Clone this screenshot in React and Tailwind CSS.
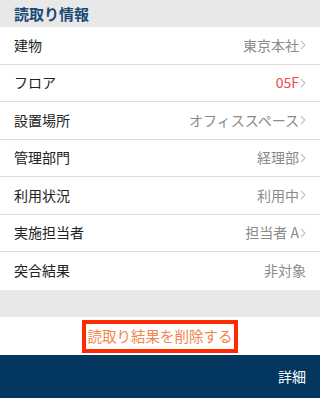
const rows = [
  { label: '建物', value: '東京本社', arrow: true },
  { label: 'フロア', value: '05F', arrow: true, red: true },
  { label: '設置場所', value: 'オフィススペース', arrow: true },
  { label: '管理部門', value: '経理部', arrow: true },
  { label: '利用状況', value: '利用中', arrow: true },
  { label: '実施担当者', value: '担当者 A', arrow: true },
  { label: '突合結果', value: '非対象', arrow: false },
];

function Chevron() {
  return (
    <svg width="6" height="10" viewBox="0 0 6 10" className="ml-[1px]">
      <path d="M1 1l4 4-4 4" fill="none" stroke="#c4c4c4" strokeWidth="1.2" />
    </svg>
  );
}

export default function App() {
  return (
    <div
      className="w-[320px] h-[398px] flex flex-col bg-white overflow-hidden"
      style={{ fontFamily: '"Noto Sans CJK JP", "Noto Sans", sans-serif' }}
    >
      {/* Section header */}
      <div className="h-[27px] bg-[#e8e8e8] flex items-center px-[14px]">
        <p className="text-[15px] font-bold text-[#1b4a74] leading-none">読取り情報</p>
      </div>

      {/* Rows */}
      <div className="flex flex-col">
        {rows.map((r, i) => (
          <div
            key={r.label}
            className={`h-[37.5px] flex items-center justify-between pl-[14px] pr-[14px]
              ${i < rows.length - 1 ? 'border-b border-[#dcdcdc]' : ''}`}
          >
            <span className="text-[14px] text-[#222]">{r.label}</span>
            <span className="flex items-center">
              <span className={`text-[14px] ${r.red ? 'text-[#f04848]' : 'text-[#8a8a8a]'}`}>
                {r.value}
              </span>
              {r.arrow && <Chevron />}
            </span>
          </div>
        ))}
      </div>

      <div className="h-[27.5px] bg-[#e8e8e8]" />

      {/* Delete action */}
      <div className="h-[38px] flex items-start justify-center pt-[3px]">
        <button className="w-[156px] h-[33px] border-4 border-[#ff2a00] flex items-center justify-center text-[14.5px] leading-none text-[#f2864a]">
          読取り結果を削除する
        </button>
      </div>

      {/* Footer bar */}
      <div className="flex-1 bg-[#03375f] flex items-center justify-end pr-[14px]">
        <span className="text-[14px] text-white">詳細</span>
      </div>
    </div>
  );
}
